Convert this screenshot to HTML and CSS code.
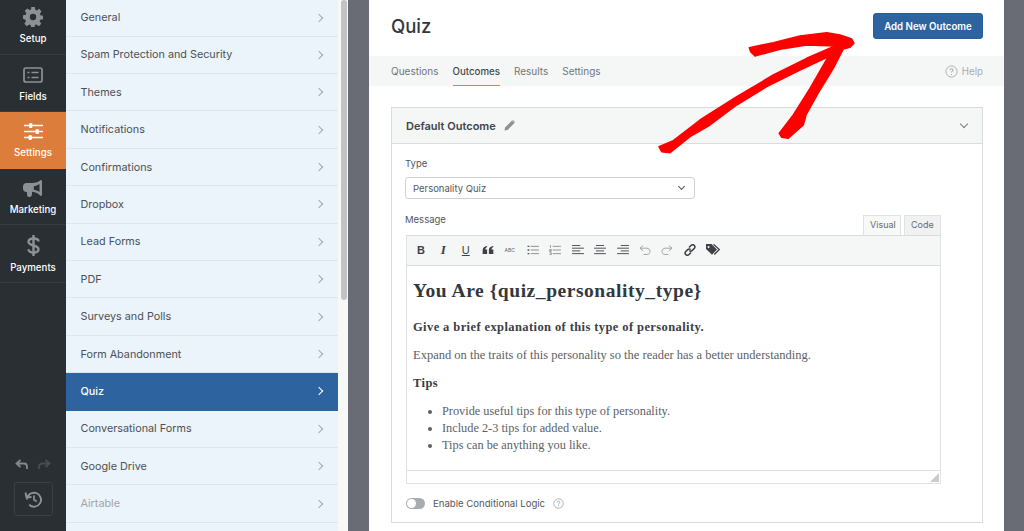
FILE: index.html
```html
<!DOCTYPE html>
<html>
<head>
  <meta charset="UTF-8">
  <title>Quiz - Outcomes</title>
  <link rel="stylesheet" href="styles.css">
</head>
<body>
  <div class="app">
    <nav class="side-nav">
      <a class="nav-item nav-setup">
        <svg width="20" height="20" viewBox="0 0 20 20"><path fill="#8d9194" d="M8.200 0h3.600l.5 2.800 1.500.6 2.400-1.600 2.300 2.600-1.700 2.300.6 1.500 2.600.6v3.500l-2.800.5-.6 1.500 1.700 2.400-2.500 2.500-2.400-1.700-1.500.6-.5 2.800H8.200l-.5-2.800-1.500-.6-2.400 1.700-2.500-2.500 1.700-2.400-.6-1.500L0 11.800V8.300l2.800-.5.6-1.500-1.700-2.400 2.500-2.500 2.400 1.700 1.500-.6zM10 6.800a3.200 3.200 0 1 0 0 6.400 3.200 3.200 0 0 0 0-6.400z"/></svg>
        <span>Setup</span>
      </a>
      <a class="nav-item nav-fields">
        <svg width="20" height="16" viewBox="0 0 20 16"><rect x="1" y="1" width="18" height="14" rx="2" fill="none" stroke="#8d9194" stroke-width="1.700"/><path stroke="#8d9194" stroke-width="1.700" d="M4.500 5.500h2M8.500 5.500h7M4.500 10.500h2M8.500 10.500h7"/></svg>
        <span>Fields</span>
      </a>
      <a class="nav-item nav-settings active">
        <svg width="19" height="17" viewBox="0 0 19 17"><path stroke="#fff" stroke-width="1.500" d="M0 2.500h19M0 8.500h19M0 14.500h19"/><rect x="5" y="0" width="3.500" height="5" rx="1.500" fill="#fff"/><rect x="11.500" y="6" width="3.500" height="5" rx="1.500" fill="#fff"/><rect x="4.500" y="12" width="3.500" height="5" rx="1.500" fill="#fff"/></svg>
        <span>Settings</span>
      </a>
      <a class="nav-item nav-marketing">
        <svg width="20" height="18" viewBox="0 0 20 18"><path fill="#8d9194" d="M17.500 0c1 0 1.500.7 1.500 1.500v13c0 .8-.5 1.500-1.500 1.500-2-2.500-5-4-8.500-4.300V14c0 2-1 3-2.500 3H6c-1.200 0-2-1-2-2.500V12H3.500C1.500 12 0 10.500 0 8.500v-2C0 4.500 1.500 3 3.500 3H9c3.500 0 6.500-.8 8.500-3zM16.500 4C14.700 5.300 12.500 6 10.800 6.200v3.600c1.700.2 3.900.9 5.700 2.200z"/></svg>
        <span>Marketing</span>
      </a>
      <a class="nav-item nav-payments">
        <svg width="13" height="21" viewBox="0 0 13 21"><path fill="none" stroke="#8d9194" stroke-width="2.400" d="M11.500 6.500C11.500 4.500 9.500 3.500 6.500 3.500S1.500 4.700 1.500 6.800c0 4.700 10 2.700 10 7.500 0 2-2 3.200-5 3.200s-5-1-5-3.200"/><path stroke="#8d9194" stroke-width="2.400" d="M6.500 0v21"/></svg>
        <span>Payments</span>
      </a>
      <div class="nav-bottom">
        <div class="undo-row">
          <svg width="13" height="11" viewBox="0 0 13 11"><path fill="none" stroke="#84888b" stroke-width="1.800" d="M5.500 1 1.500 4.500l4 3.500M1.500 4.500H9c2 0 3 1.500 3 3.500v2"/></svg>
          <svg width="13" height="11" viewBox="0 0 13 11"><path fill="none" stroke="#494d51" stroke-width="1.800" d="M7.500 1l4 3.500-4 3.500M11.500 4.500H4c-2 0-3 1.500-3 3.500v2"/></svg>
        </div>
        <div class="history-box">
          <svg width="18" height="17" viewBox="0 0 18 17"><path fill="none" stroke="#8d9194" stroke-width="1.900" d="M3 8.500A7 7 0 1 1 5.200 13.800M1.500 1.500l1 5 5-.5"/><path fill="none" stroke="#8d9194" stroke-width="1.700" d="M10 4.500v4.200l2.800 1.800"/></svg>
        </div>
      </div>
    </nav>

    <div class="settings-menu">
      <a class="menu-row">General<i class="chev"></i></a>
      <a class="menu-row">Spam Protection and Security<i class="chev"></i></a>
      <a class="menu-row">Themes<i class="chev"></i></a>
      <a class="menu-row">Notifications<i class="chev"></i></a>
      <a class="menu-row">Confirmations<i class="chev"></i></a>
      <a class="menu-row">Dropbox<i class="chev"></i></a>
      <a class="menu-row">Lead Forms<i class="chev"></i></a>
      <a class="menu-row">PDF<i class="chev"></i></a>
      <a class="menu-row">Surveys and Polls<i class="chev"></i></a>
      <a class="menu-row">Form Abandonment<i class="chev"></i></a>
      <a class="menu-row selected">Quiz<i class="chev"></i></a>
      <a class="menu-row">Conversational Forms<i class="chev"></i></a>
      <a class="menu-row">Google Drive<i class="chev"></i></a>
      <a class="menu-row muted">Airtable<i class="chev"></i></a>
    </div>
    <div class="scroll-track"><div class="scroll-thumb"></div></div>

    <main class="stage">
      <section class="panel">
        <header class="panel-head">
          <h1>Quiz</h1>
          <button class="btn-add">Add New Outcome</button>
        </header>
        <div class="tabs">
          <a class="tab">Questions</a>
          <a class="tab current">Outcomes</a>
          <a class="tab">Results</a>
          <a class="tab">Settings</a>
          <a class="help">
            <svg width="13" height="13" viewBox="0 0 14 14"><circle cx="7" cy="7" r="6" fill="none" stroke="#a9acae" stroke-width="1"/><path fill="none" stroke="#a9acae" stroke-width="1.100" d="M5.300 5.600C5.300 4.600 6 4 7 4s1.700.6 1.700 1.500C8.700 6.700 7 6.700 7 8.200"/><circle cx="7" cy="10" r=".7" fill="#a9acae"/></svg>
            Help
          </a>
        </div>

        <div class="outcome">
          <div class="outcome-head">
            <span class="outcome-title">Default Outcome</span>
            <svg width="11" height="11" viewBox="0 0 11 11"><path fill="#8f9294" d="M8 .5 10.500 3 3.500 10 .5 10.500 1 7.500zM9 0l2 2-.5.5-2-2z"/></svg>
            <i class="chev-down"></i>
          </div>
          <div class="outcome-body">
            <label class="field-label">Type</label>
            <div class="select">Personality Quiz<i class="select-arrow"></i></div>

            <div class="message-bar">
              <label class="field-label">Message</label>
              <div class="editor-tabs">
                <span class="editor-tab on">Visual</span>
                <span class="editor-tab">Code</span>
              </div>
            </div>
            <div class="editor">
              <div class="toolbar">
                <b class="tb tb-b">B</b>
                <i class="tb tb-i">I</i>
                <u class="tb tb-u">U</u>
                <svg class="tb" width="12" height="8" viewBox="0 0 12 9"><path fill="#3d4145" d="M5 0v1.200C3.500 2 3 3 3 3.800h2V9H0V4.500C0 2 2 .5 5 0zM12 0v1.200c-1.500.8-2 1.800-2 2.600h2V9H7V4.500C7 2 9 .5 12 0z"/></svg>
                <span class="tb tb-abc">ABC</span>
                <svg class="tb" width="12" height="10" viewBox="0 0 13 11"><path stroke="#84888b" stroke-width="1" d="M4 1.500h9M4 5.500h9M4 9.500h9"/><path stroke="#55595c" stroke-width="1.600" d="M.5 1.500h2M.5 5.500h2M.5 9.500h2"/></svg>
                <svg class="tb" width="12" height="10" viewBox="0 0 13 11"><path fill="none" stroke="#8c9093" stroke-width="1" d="M4 1.500h9M4 5.500h9M4 9.500h9M1.500 0v3M.5 5h2v1h-2v1h2M.5 8.500h2v2h-2"/></svg>
                <svg class="tb" width="12" height="10" viewBox="0 0 13 11"><path stroke="#3d4145" stroke-width="1" d="M0 .5h9M0 3.500h13M0 6.500h9M0 9.500h13"/></svg>
                <svg class="tb" width="12" height="10" viewBox="0 0 13 11"><path stroke="#3d4145" stroke-width="1" d="M2 .5h9M0 3.500h13M2 6.500h9M0 9.500h13"/></svg>
                <svg class="tb" width="12" height="10" viewBox="0 0 13 11"><path stroke="#3d4145" stroke-width="1" d="M4 .5h9M0 3.500h13M4 6.500h9M0 9.500h13"/></svg>
                <svg class="tb" width="12" height="10" viewBox="0 0 13 11"><path fill="none" stroke="#a4a7a9" stroke-width="1.100" d="M4.500 .5 1 3.500l3.500 3M1 3.500h7.500c2 0 3.500 1.500 3.500 3.500S10.500 10.500 8.500 10.500H5"/></svg>
                <svg class="tb" width="12" height="10" viewBox="0 0 13 11"><path fill="none" stroke="#a4a7a9" stroke-width="1.100" d="M8.500 .5 12 3.500l-3.500 3M12 3.500H4.500C2.500 3.500 1 5 1 7s1.500 3.500 3.500 3.500H8"/></svg>
                <svg class="tb" width="12" height="12" viewBox="0 0 12 12"><path fill="none" stroke="#3d4145" stroke-width="1.500" d="M5 3.500 7 1.500c1-1 2.500-1 3.300-.1s.8 2.200-.1 3.100L8.300 6.400c-1 1-2.200.9-3 .1M7 8.500 5 10.500c-1 1-2.500 1-3.300.1S.9 8.400 1.800 7.500L3.700 5.600c1-1 2.200-.9 3-.1"/></svg>
                <svg class="tb" width="15" height="11" viewBox="0 0 15 11"><path fill="#3d4145" d="M0 0h5.500L11 5.500 6 10.800 0 5zM2.500 2a1 1 0 1 0 .1 0z"/><path fill="none" stroke="#3d4145" stroke-width="1.300" d="M7.500.3l5.800 5.200-5 5"/></svg>
              </div>
              <div class="editor-body">
                <h2>You Are {quiz_personality_type}</h2>
                <p class="strong">Give a brief explanation of this type of personality.</p>
                <p>Expand on the traits of this personality so the reader has a better understanding.</p>
                <p class="strong tips">Tips</p>
                <ul>
                  <li>Provide useful tips for this type of personality.</li>
                  <li>Include 2-3 tips for added value.</li>
                  <li>Tips can be anything you like.</li>
                </ul>
              </div>
              <div class="status-bar">
                <svg width="9" height="9" viewBox="0 0 9 9"><path fill="#c9cbcd" d="M9 0v9H0z"/></svg>
              </div>
            </div>
            <div class="logic">
              <span class="toggle"><span class="knob"></span></span>
              <span>Enable Conditional Logic</span>
              <svg width="11" height="11" viewBox="0 0 14 14"><circle cx="7" cy="7" r="6" fill="none" stroke="#a9acae" stroke-width="1.200"/><path fill="none" stroke="#a9acae" stroke-width="1.200" d="M5.300 5.600C5.300 4.600 6 4 7 4s1.700.6 1.700 1.500C8.700 6.700 7 6.700 7 8.200"/><circle cx="7" cy="10" r=".7" fill="#a9acae"/></svg>
            </div>
          </div>
        </div>
      </section>
    </main>

    <svg class="red-arrow" width="210" height="135" viewBox="650 25 210 135">
      <path fill="#fe0000" stroke="#fe0000" stroke-width="1.500" stroke-linejoin="round" d="M749.300 47.700L773.300 42.700L800 36L826.700 32.700L840 35L851.700 39L854 43.300L850 47.300L843.300 49L833.300 68.300L820 90L806 115L803.300 125L788.300 138.300L781.700 137.300L779.300 133.300L793.300 115L810 88.300L828.300 56.700L800 70L766.700 86.700L736.700 105L710 125L690 136.700L670 152.700L661.700 151.700L659 146.700L673.300 140.700L700 120L736.700 96.700L773.300 75L806.700 58.300L835 46L806.700 45L780 49.300L755 56L750.700 51.700Z"/>
    </svg>
  </div>
</body>
</html>
```

FILE: styles.css
```css
* { box-sizing: border-box; }
html, body { margin: 0; padding: 0; height: 100%; overflow: hidden; }
body { font-family: Inter, "Liberation Sans", Arial, sans-serif; color: #444; background: #696c75; }
.app { position: relative; display: flex; width: 1024px; height: 531px; overflow: hidden; }

/* left nav */
.side-nav { width: 66px; height: 531px; flex: none; background: #2a2f33; display: flex; flex-direction: column; }
.nav-item { display: flex; flex-direction: column; align-items: center; height: 56.500px; padding-top: 10px; gap: 6px; color: #fff; font-size: 9.700px; font-weight: 500; border-bottom: 1px solid #363b3f; }
.nav-item.active { background: #dd7d3c; border-bottom: 0; padding-top: 11px; gap: 7px; }
.nav-setup { height: 55px; padding-top: 7px; gap: 6px; }
.nav-fields { padding-top: 12px; gap: 8px; height: 57px; }
.nav-marketing { padding-top: 11px; gap: 6px; }
.nav-payments { height: 58px; }
.nav-bottom { margin-top: auto; padding-bottom: 15px; display: flex; flex-direction: column; align-items: center; gap: 12px; }
.undo-row { display: flex; gap: 10px; }
.history-box { width: 39px; height: 34px; border: 1px solid #3b4044; border-radius: 3px; display: flex; align-items: center; justify-content: center; }

/* settings list */
.settings-menu { width: 272px; flex: none; margin-top: -.700px; background: #ebf3fb; }
.menu-row { display: flex; align-items: center; justify-content: space-between; height: 37.400px; padding: 0 16px 0 14.500px; font-size: 10.800px; color: #4d5155; border-bottom: 1px solid #dfe5ec; }
.menu-row.selected { background: #2d649f; color: #fff; font-weight: 500; border-bottom-color: #2d649f; }
.menu-row.muted { color: #a2a5a8; }
.chev { width: 6px; height: 6px; border-top: 1px solid #a3a7aa; border-right: 1px solid #a3a7aa; transform: rotate(45deg); }
.selected .chev { border-color: #fff; border-width: 1.500px 1.500px 0 0; }
.scroll-track { width: 10px; flex: none; background: #f8f8f7; padding: 0 1px 0 3px; }
.scroll-thumb { width: 6px; height: 300px; border-radius: 3px; background: #c2c3c4; }

/* main panel */
.stage { flex: 1; padding: 0 20px 0 21px; background: #696c75; }
.panel { width: 635px; height: 531px; background: #fff; }
.panel-head { display: flex; align-items: center; justify-content: space-between; height: 56px; padding: 0 21px 4px 22px; }
.panel-head h1 { margin: 0; font-size: 18.500px; font-weight: 500; color: #33383c; }
.btn-add { width: 110px; height: 26px; padding: 0; background: #2d649f; color: #fff; border: 1px solid #2a5e95; border-radius: 3px; font: 600 9.700px Inter, "Liberation Sans", Arial, sans-serif; }
.tabs { display: flex; align-items: stretch; gap: 14px; height: 30px; padding: 0 21px 0 22px; background: #f5f6f6; font-size: 10px; }
.tab { display: flex; align-items: center; color: #72767a; }
.tab.current { color: #444a4e; font-size: 9.700px; font-weight: 500; padding-top: 1.500px; border-bottom: 1.500px solid #e5803c; }
.help { margin-left: auto; display: flex; align-items: center; gap: 4px; font-size: 9.700px; color: #a9acae; }
.outcome { margin: 21px 21px 0 22px; border: 1px solid #d9dcde; height: 416px; }
.outcome-head { display: flex; align-items: center; gap: 8px; height: 36px; padding: 0 14px; background: #f5f6f6; border-bottom: 1px solid #d9dcde; }
.outcome-title { font-size: 11px; font-weight: 600; color: #3f4448; }
.chev-down { margin-left: auto; margin-right: 1px; width: 6px; height: 6px; margin-top: -4px; border-right: 1px solid #777b7e; border-bottom: 1px solid #777b7e; transform: rotate(45deg); }
.outcome-body { padding: 14px 41px 0 13px; }
.field-label { display: block; font-size: 9.500px; color: #53575b; }
.select { display: flex; align-items: center; justify-content: space-between; width: 290px; height: 22px; margin-top: 8px; padding: 0 10px 0 7px; border: 1px solid #cfd2d4; border-radius: 3px; font-size: 9.500px; color: #53575b; }
.select-arrow { width: 5px; height: 5px; margin-top: -3px; border-right: 1px solid #555; border-bottom: 1px solid #555; transform: rotate(45deg); }
.message-bar { display: flex; justify-content: space-between; align-items: flex-start; margin-top: 15px; height: 21px; }
.editor-tabs { display: flex; margin-top: 1px; gap: 3px; }
.editor-tab { padding: 0 6px; width: 37px; height: 20px; line-height: 18px; font-size: 9px; color: #686c70; background: #f0f1f1; border: 1px solid #e0e2e4; border-bottom: 0; }
.editor-tab.on { background: #f7f8f8; width: 38px; }
.editor { margin-left: 1px; border: 1px solid #e0e2e4; border-top-color: #d9dcde; }
.toolbar { display: flex; align-items: center; height: 30px; padding: 0 7px 2px 8px; background: #f5f6f6; border-bottom: 1px solid #d9dcde; gap: 10.400px; }
.tb { flex: none; display: block; font-size: 10px; color: #3d4145; font-style: normal; }
.tb-b, .tb-i, .tb-u { width: 12px; text-align: center; font-family: "Liberation Sans", Arial, sans-serif; font-size: 11px; }
.tb-i { font-family: "Liberation Serif", serif; font-style: italic; font-weight: 700; font-size: 13px; }
.tb-abc { font-size: 5px; width: 12px; color: #666; }
.editor-body { height: 204px; padding: 15px 6px 0; font-family: "Liberation Serif", "Times New Roman", serif; font-size: 12.500px; color: #5d6165; }
.editor-body h2 { margin: 0 0 19px; font-size: 19.500px; letter-spacing: .55px; line-height: 20px; font-weight: 700; color: #33383c; }
.editor-body p { margin: 0 0 14px; line-height: 14px; }
.editor-body .strong { font-weight: 700; letter-spacing: .4px; color: #3b4044; }
.editor-body ul { margin: -1px 0 0; padding-left: 29px; line-height: 17px; font-size: 12.300px; }
.status-bar { height: 13px; border-top: 1px solid #e0e2e4; display: flex; justify-content: flex-end; align-items: flex-end; padding: 0 1px 1px 0; }
.logic { display: flex; align-items: center; gap: 8px; margin: 14px 0 0 1px; font-size: 9.600px; color: #53575b; }
.toggle { width: 19px; height: 11px; border-radius: 6px; background: #a9acae; padding: 1px; display: flex; }
.knob { width: 9px; height: 9px; border-radius: 50%; background: #fff; }

/* the hand-drawn arrow sits over the page */
.red-arrow { position: absolute; left: 650px; top: 25px; }
```
